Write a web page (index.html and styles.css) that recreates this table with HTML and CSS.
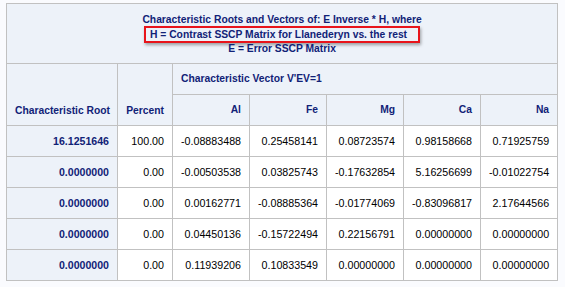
FILE: index.html
```html
<!DOCTYPE html>
<html lang="en">
<head>
    <meta charset="UTF-8">
    <title>Characteristic Roots and Vectors</title>
    <link rel="stylesheet" href="styles.css">
</head>
<body>
  <table class="sas-table">
    <colgroup>
      <col class="c-root">
      <col class="c-pct">
      <col class="c-vec"><col class="c-vec"><col class="c-vec"><col class="c-vec"><col class="c-vec">
    </colgroup>
    <thead>
      <tr>
        <th class="title" colspan="7">
          Characteristic Roots and Vectors of: E Inverse * H, where<br>
          <span class="mark">H = Contrast SSCP Matrix for Llanederyn vs. the rest</span><br>
          E = Error SSCP Matrix
        </th>
      </tr>
      <tr>
        <th class="bottom" rowspan="2">Characteristic Root</th>
        <th class="bottom" rowspan="2">Percent</th>
        <th class="span" colspan="5">Characteristic Vector V'EV=1</th>
      </tr>
      <tr>
        <th class="num">Al</th>
        <th class="num">Fe</th>
        <th class="num">Mg</th>
        <th class="num">Ca</th>
        <th class="num">Na</th>
      </tr>
    </thead>
    <tbody>
      <tr>
        <th class="rowhead">16.1251646</th>
        <td>100.00</td>
        <td>-0.08883488</td><td>0.25458141</td><td>0.08723574</td><td>0.98158668</td><td>0.71925759</td>
      </tr>
      <tr>
        <th class="rowhead">0.0000000</th>
        <td>0.00</td>
        <td>-0.00503538</td><td>0.03825743</td><td>-0.17632854</td><td>5.16256699</td><td>-0.01022754</td>
      </tr>
      <tr>
        <th class="rowhead">0.0000000</th>
        <td>0.00</td>
        <td>0.00162771</td><td>-0.08885364</td><td>-0.01774069</td><td>-0.83096817</td><td>2.17644566</td>
      </tr>
      <tr>
        <th class="rowhead">0.0000000</th>
        <td>0.00</td>
        <td>0.04450136</td><td>-0.15722494</td><td>0.22156791</td><td>0.00000000</td><td>0.00000000</td>
      </tr>
      <tr>
        <th class="rowhead">0.0000000</th>
        <td>0.00</td>
        <td>0.11939206</td><td>0.10833549</td><td>0.00000000</td><td>0.00000000</td><td>0.00000000</td>
      </tr>
    </tbody>
  </table>
</body>
</html>
```

FILE: styles.css
```css
/* page */
html, body {
  margin: 0;
  padding: 0;
}
body {
  background: #fafbfe;
  padding: 3px 6px;
  font-family: "Liberation Sans", Arial, sans-serif;
  font-size: 10.7px;
  color: #000000;
}

/* SAS style output table */
.sas-table {
  border-collapse: collapse;
  border: 1px solid #c1c1c1;
  table-layout: fixed;
  width: 552px;
}
.c-root { width: 111px; }
.c-pct { width: 55px; }
.c-vec { width: 77px; }

.sas-table th,
.sas-table td {
  border: 1px solid #c1c1c1;
  padding: 0 8px;
  height: 30px;
  white-space: nowrap;
}
.sas-table th {
  background: #edf2f9;
  color: #112277;
  font-weight: bold;
  font-size: 10.3px;
}
.sas-table td {
  background: #ffffff;
  text-align: right;
}

.sas-table th.title {
  text-align: center;
  line-height: 14.5px;
  padding: 9px 8px 6px;
  height: auto;
}
.mark {
  border: 2px solid #e8141b;
  padding: 1px 11px 1px 4px;
  box-shadow: 1px 2px 3px rgba(0,0,0,0.35);
}

.sas-table th.bottom {
  vertical-align: bottom;
  padding-bottom: 9px;
  text-align: right;
}
.sas-table th.span {
  text-align: left;
  height: 30px;
}
.sas-table th.num {
  text-align: right;
  height: 30px;
}
.sas-table th.rowhead {
  text-align: right;
  font-size: 10.6px;
}
```
